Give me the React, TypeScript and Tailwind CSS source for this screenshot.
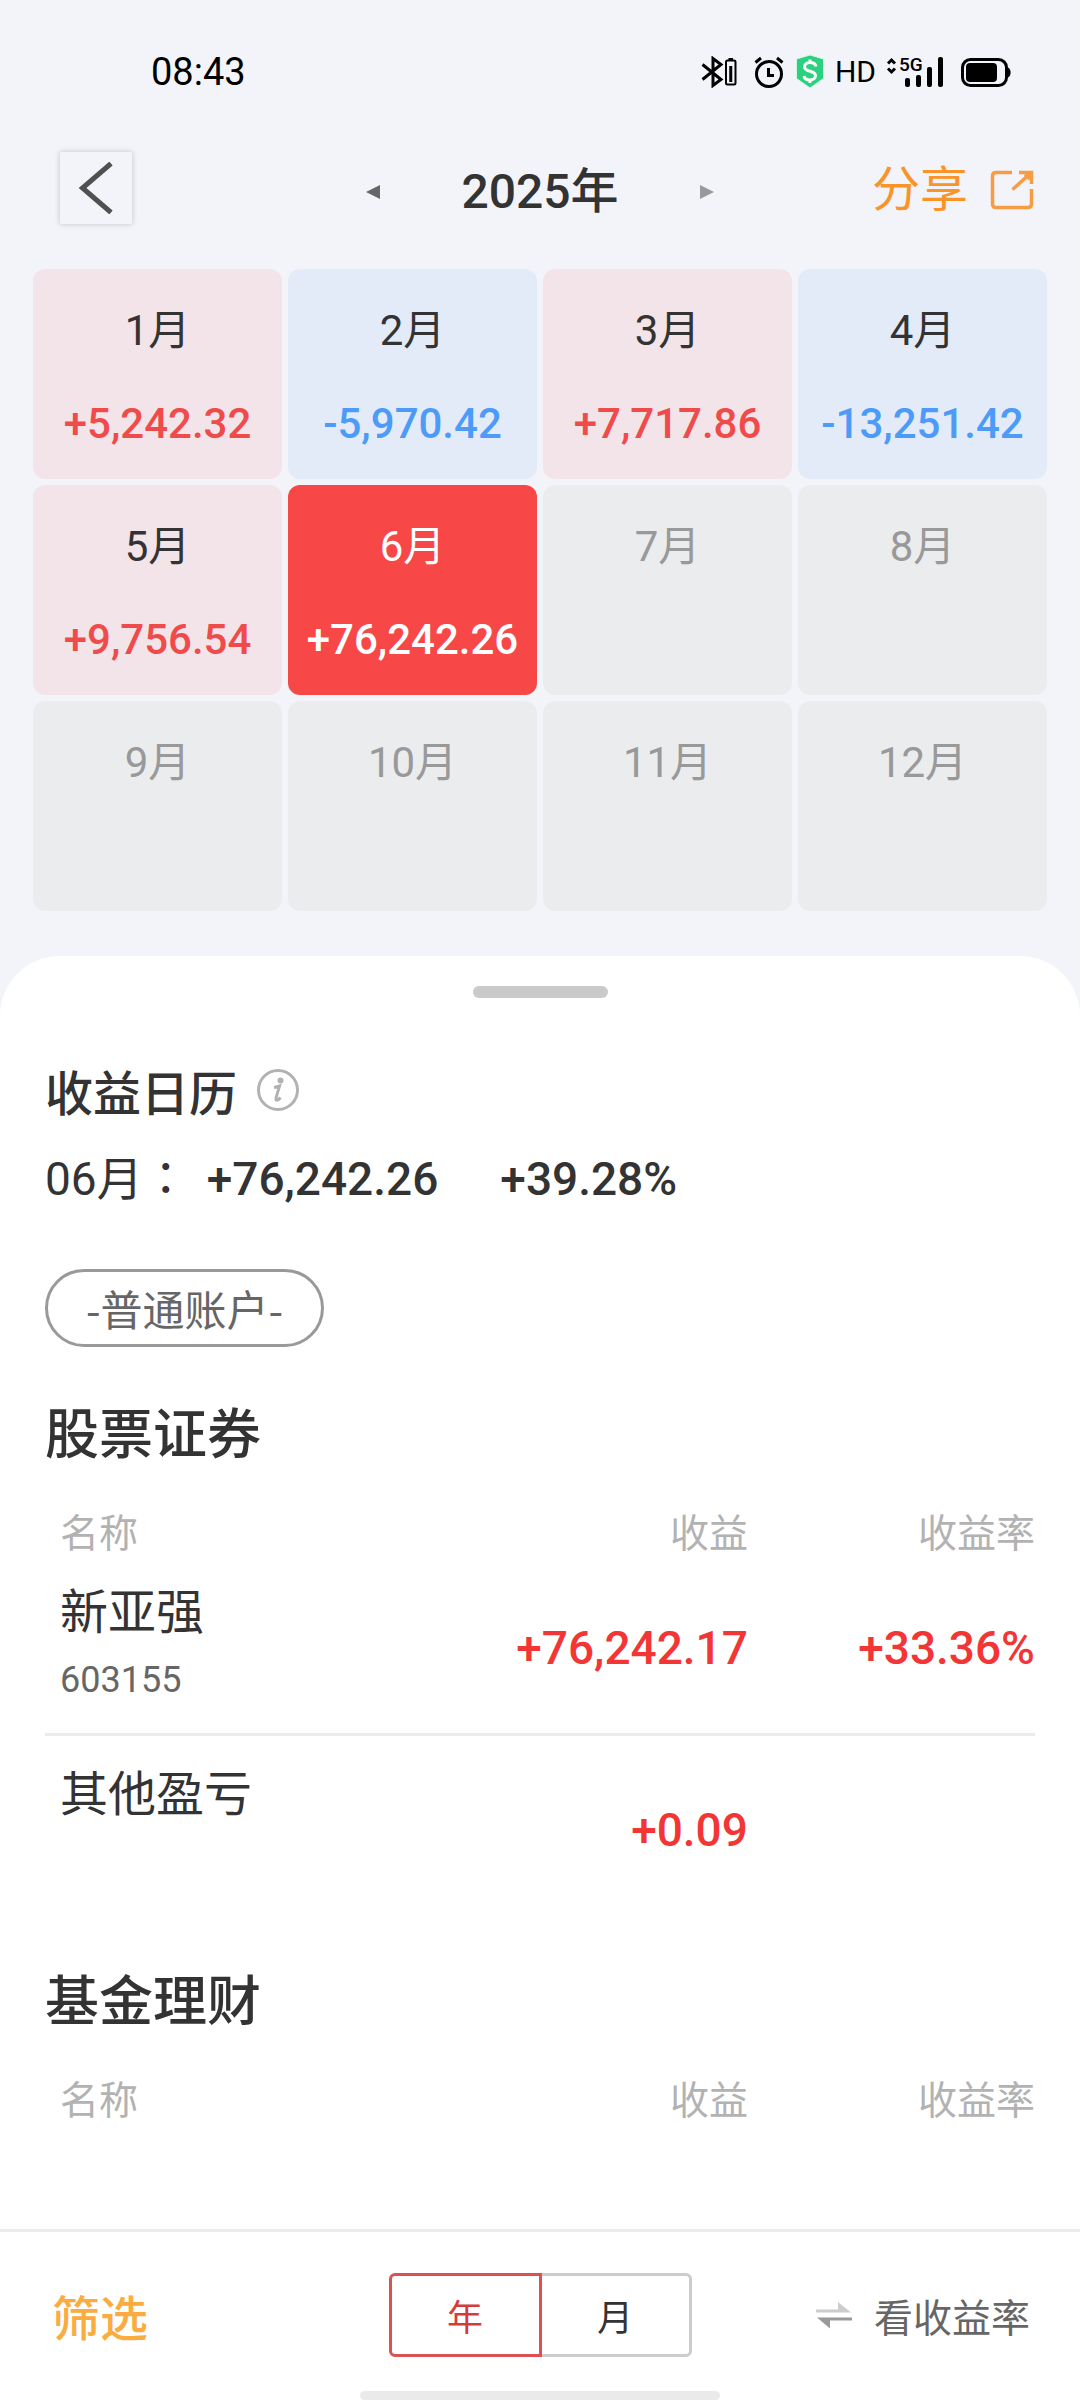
import { useState } from "react";
import clsx from "clsx";

type Month = { month: number; profit?: string };
type Row = { name: string; code?: string; profit: string; rate?: string };

const months: Month[] = [
  { month: 1, profit: "+5,242.32" },
  { month: 2, profit: "-5,970.42" },
  { month: 3, profit: "+7,717.86" },
  { month: 4, profit: "-13,251.42" },
  { month: 5, profit: "+9,756.54" },
  { month: 6, profit: "+76,242.26" },
  { month: 7 },
  { month: 8 },
  { month: 9 },
  { month: 10 },
  { month: 11 },
  { month: 12 },
];

const stocks: Row[] = [
  { name: "新亚强", code: "603155", profit: "+76,242.17", rate: "+33.36%" },
  { name: "其他盈亏", profit: "+0.09" },
];

const StatusBar = () => (
  <div className="flex h-36 items-center justify-between pl-[151px] pr-[68px] text-black">
    <span className="text-[38px] leading-[48px]">08:43</span>
    <div className="flex items-center">
      {/* Bluetooth with device battery */}
      <svg className="mr-4 h-8 w-9" viewBox="0 0 36 32" fill="none" stroke="currentColor">
        <path d="M1.5 8.5L20 23.5L12 29.5V2.5L20 8.5L1.5 23.5" strokeWidth="3" />
        <rect x="25" y="4.5" width="9.5" height="24" rx="1.5" strokeWidth="2" />
        <path d="M27.5 3h4.5" strokeWidth="2" />
        <path d="M29.75 10v16" strokeWidth="3" />
      </svg>
      {/* Alarm */}
      <svg className="mr-2.5 h-8 w-8" viewBox="0 0 32 32" fill="none" stroke="currentColor" strokeWidth="3">
        <circle cx="16" cy="18" r="12.5" />
        <path d="M15.5 12v7.5h5.5" />
        <path d="M2.5 6.5L8 2M29.5 6.5L24 2" />
      </svg>
      {/* Payment shield */}
      <svg className="mr-2.5 h-9 w-[30px]" viewBox="0 0 30 36" fill="none">
        <path d="M15 1L28.5 5V24.5L15 34L1.5 24.5V5Z" fill="#2bd17e" stroke="#d5f6e5" strokeWidth="1" />
        <path
          d="M21 12.5C20.5 9.5 18 8.5 15 8.5C11.5 8.5 9.5 10.5 9.5 13C9.5 18.5 20.5 16 20.5 21.5C20.5 24.5 18 26 15 26C12 26 9.5 24.5 9 22M15 5.5V8.5M15 26V29"
          stroke="white"
          strokeWidth="3"
        />
      </svg>
      <span className="mr-2.5 text-[30px] leading-[36px]">HD</span>
      {/* Signal */}
      <svg className="mr-4 h-8 w-[58px] overflow-visible" viewBox="0 0 58 32">
        <path d="M2 7.5L5.5 4L9 7.5M2 12.5L5.5 16L9 12.5" fill="none" stroke="currentColor" strokeWidth="3" />
        <text x="13" y="15" fontSize="19" fontWeight="500" fill="currentColor">5G</text>
        <rect x="19" y="22" width="5" height="9" rx="2" />
        <rect x="30" y="19" width="5" height="12" rx="2" />
        <rect x="41" y="11" width="5" height="20" rx="2" />
        <rect x="52" y="1" width="5" height="30" rx="2" />
      </svg>
      {/* Battery */}
      <svg className="h-8 w-[52px]" viewBox="0 0 52 32">
        <rect x="2.5" y="3.5" width="44" height="26" rx="8" fill="none" stroke="currentColor" strokeWidth="3" />
        <rect x="6" y="7" width="31" height="19" rx="4" />
        <path d="M48 11.5C51.5 13 51.5 20 48 21.5Z" />
      </svg>
    </div>
  </div>
);

const MonthCell = ({ month, profit, active, onSelect }: Month & { active: boolean; onSelect: () => void }) => (
  <button
    type="button"
    disabled={!profit}
    onClick={onSelect}
    className={clsx(
      "flex flex-col items-center gap-[33px] rounded-xl pt-8 pb-[25px] leading-[60px]",
      active && "bg-[#f74747] text-white",
      !active && !profit && "bg-[#ebecee] text-[#999]",
      !active && profit?.startsWith("+") && "bg-[#f3e4e9] text-[#333]",
      !active && profit?.startsWith("-") && "bg-[#e4ebf8] text-[#333]",
    )}
  >
    <span className="text-[42px]">{month}月</span>
    {profit && (
      <span
        className={clsx(
          "text-[42px] font-medium",
          !active && (profit.startsWith("+") ? "text-[#f04b4b]" : "text-[#4d9bf8]"),
        )}
      >
        {profit}
      </span>
    )}
  </button>
);

const ProfitTable = ({ title, rows }: { title: string; rows: Row[] }) => (
  <section className="mt-12 font-['Noto_Sans_CJK_SC',sans-serif]">
    <h2 className="text-[54px] leading-[72px] font-medium">{title}</h2>
    <table className="mt-[39px] w-full table-fixed" aria-label={title}>
      <thead>
        <tr className="text-[39px] leading-[48px] text-[#b2b2b2]">
          <th className="pl-[15px] text-left font-normal">名称</th>
          <th className="w-[36%] text-right font-normal">收益</th>
          <th className="w-[29%] text-right font-normal">收益率</th>
        </tr>
      </thead>
      <tbody>
        {rows.map((row) => (
          <tr key={row.name} className="h-[180px] border-b-3 border-[#eaecec] align-top last:border-b-0">
            <td className="pt-6 pl-[15px]">
              <div className="text-[48px] leading-[60px]">{row.name}</div>
              {row.code && <div className="mt-[18px] font-[Roboto,sans-serif] text-[36px] leading-[48px] text-[#666]">{row.code}</div>}
            </td>
            <td className="pt-16 text-right font-[Roboto,sans-serif] text-[46px] leading-[60px] font-medium text-[#f23535]">
              {row.profit}
            </td>
            <td className="pt-16 text-right font-[Roboto,sans-serif] text-[46px] leading-[60px] font-medium text-[#f23535]">
              {row.rate}
            </td>
          </tr>
        ))}
      </tbody>
    </table>
  </section>
);

const App = () => {
  const [selected, setSelected] = useState(6);
  const [mode, setMode] = useState("年");

  return (
    <div className="flex min-h-screen flex-col bg-[#f3f4fa] font-[Roboto,'Noto_Sans_CJK_SC',sans-serif] text-[#333]">
      <StatusBar />

      <header className="grid grid-cols-[1fr_auto_1fr] px-[46px] pt-2">
        <button
          type="button"
          aria-label="返回"
          className="ml-3.5 flex size-[72px] items-center justify-center shadow-[0_0_6px_rgba(0,0,0,0.2)]"
        >
          <svg className="h-[52px] w-9" viewBox="0 0 36 52" fill="none" stroke="#505050" strokeWidth="5">
            <path d="M33 1.5L4.5 26L33 50.5" />
          </svg>
        </button>
        <div className="flex items-center gap-[81px] pt-2">
          <button type="button" aria-label="上一年">
            <svg className="h-3.5 w-3.5" viewBox="0 0 14 14" fill="#666">
              <path d="M14 0V14L0 7Z" />
            </svg>
          </button>
          <h1 className="text-[48px] leading-[60px] font-medium">2025年</h1>
          <button type="button" aria-label="下一年">
            <svg className="h-3.5 w-3.5" viewBox="0 0 14 14" fill="#999">
              <path d="M0 0V14L14 7Z" />
            </svg>
          </button>
        </div>
        <button
          type="button"
          className="flex items-center gap-[22px] justify-self-end pt-1 text-[48px] leading-[60px] text-[#fa9328]"
        >
          分享
          <svg className="h-10 w-11" viewBox="0 0 44 40" fill="none" stroke="#f79c42" strokeWidth="3.5">
            <path d="M22 2.5H6Q2.5 2.5 2.5 6V34Q2.5 37.5 6 37.5H38Q41.5 37.5 41.5 34V19" />
            <path d="M29 2.5H41.5V14M41.5 2.5L22.5 19.5M35 4.5L40 9" />
          </svg>
        </button>
      </header>

      <div className="mx-[33px] my-[45px] grid auto-rows-fr grid-cols-4 gap-1.5">
        {months.map((m) => (
          <MonthCell key={m.month} {...m} active={m.month === selected} onSelect={() => setSelected(m.month)} />
        ))}
      </div>

      <main className="flex-1 rounded-t-[60px] bg-white px-[45px] pt-[30px]">
        <div className="mx-auto h-3 w-[135px] rounded-full bg-[#cacaca]" />
        <div className="mt-[62px] flex items-center gap-5">
          <h2 className="font-['Noto_Sans_CJK_SC',sans-serif] text-[48px] leading-[60px] font-medium">收益日历</h2>
          <button type="button" aria-label="说明">
            <svg className="size-[42px]" viewBox="0 0 42 42" fill="none" stroke="#b2b2b2">
              <circle cx="21" cy="21" r="19.5" strokeWidth="3" />
              <circle cx="23.5" cy="11.5" r="3" fill="#b2b2b2" stroke="none" />
              <path d="M17 18.5Q20 18 22.5 17L19 29Q18.5 31.5 20.5 31Q22 30.5 23.5 28.5" strokeWidth="3" />
            </svg>
          </button>
        </div>
        <p className="mt-[29px] flex items-center text-[46px] leading-[60px]">
          <span>
            06月<span className="font-['Noto_Sans_CJK_TC',sans-serif] leading-[40px]">：</span>
          </span>
          <span className="ml-[18px] font-medium">+76,242.26</span>
          <span className="ml-[62px] font-medium">+39.28%</span>
        </p>
        <button
          type="button"
          className="mt-[60px] block rounded-full border-3 border-[#999] px-[38px] py-1.5 font-['Noto_Sans_CJK_SC',sans-serif] text-[42px] leading-[60px] text-[#666]"
        >
          -普通账户-
        </button>

        <ProfitTable title="股票证券" rows={stocks} />
        <ProfitTable title="基金理财" rows={[]} />
      </main>

      <footer className="border-t-3 border-[#eaecec] bg-white font-['Noto_Sans_CJK_SC',sans-serif]">
        <div className="grid grid-cols-[1fr_auto_1fr] items-center px-[50px] pt-[41px] pb-[34px]">
          <button type="button" className="justify-self-start pl-0.5 text-[48px] leading-[60px] font-medium text-[#faac40]">
            筛选
          </button>
          <div className="flex text-[36px] leading-[78px]">
            {["年", "月"].map((label) => (
              <button
                key={label}
                type="button"
                aria-pressed={mode === label}
                onClick={() => setMode(label)}
                className={clsx(
                  "w-[153px] border-3 first:rounded-l-md last:-ml-[3px] last:rounded-r-md",
                  mode === label ? "relative border-[#dc5252] text-[#d43c3c]" : "border-[#ccc]",
                )}
              >
                {label}
              </button>
            ))}
          </div>
          <button type="button" className="flex items-center gap-[22px] justify-self-end text-[39px] leading-[48px] text-[#666]">
            <svg className="h-7 w-9" viewBox="0 0 36 28">
              <path d="M0 8.5H22V1L35 11.5H0Z" fill="#ccc" />
              <path d="M36 16.5V19.5H14V27.5L1 16.5Z" fill="#999" />
            </svg>
            看收益率
          </button>
        </div>
        <div className="mx-auto h-[9px] w-1/3 rounded-full bg-[#eaeaea]" />
      </footer>
    </div>
  );
};

export default App;
